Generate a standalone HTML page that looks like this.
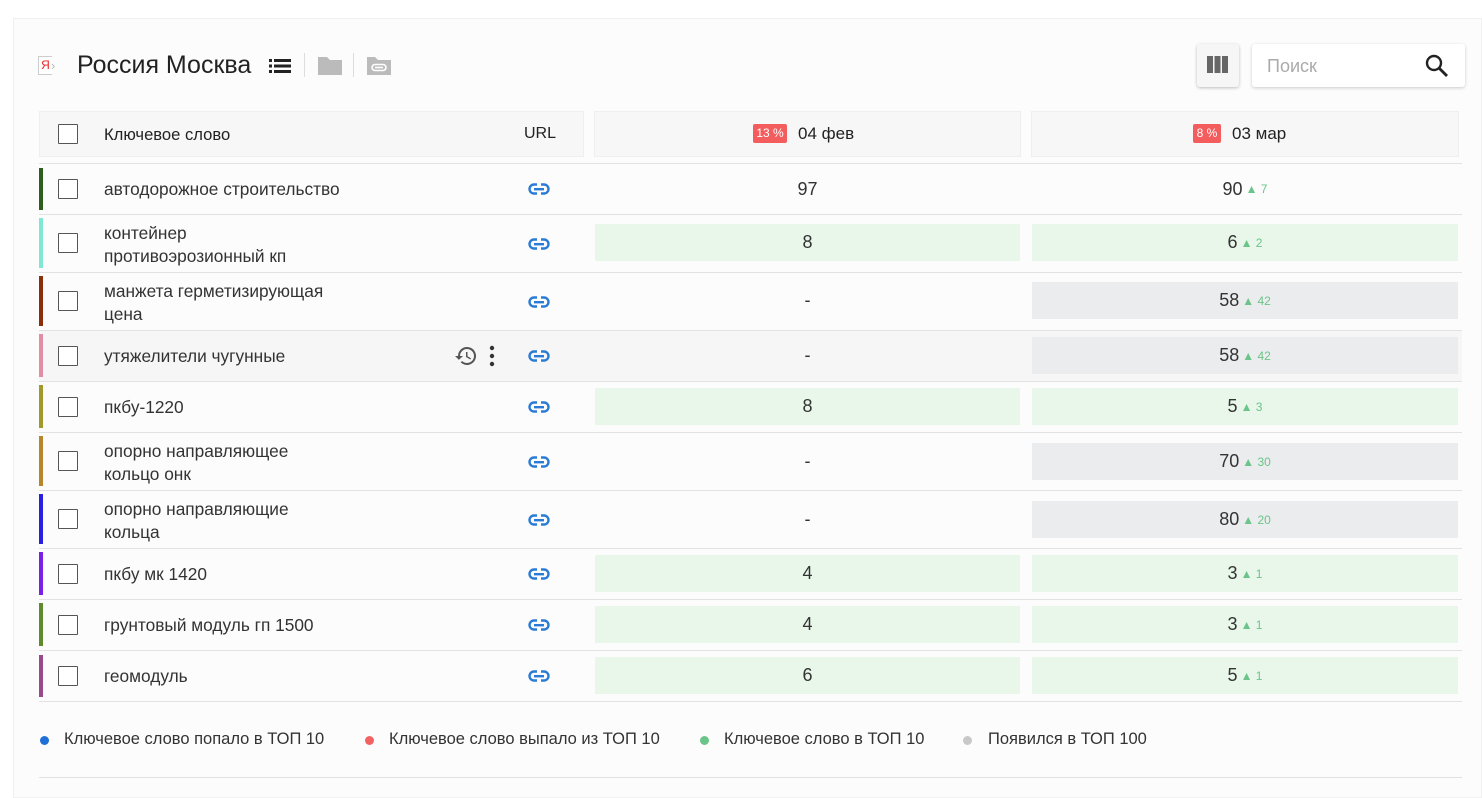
<!DOCTYPE html>
<html><head><meta charset="utf-8"><style>
*{box-sizing:border-box;margin:0;padding:0}
body{width:1482px;height:786px;background:#fff;font-family:"Liberation Sans","DejaVu Sans",sans-serif;color:#333;position:relative;overflow:hidden}
.card{position:absolute;left:13px;top:18px;width:1469px;height:780px;background:#fcfcfc;border:1px solid #f0f0f0}
.a{position:absolute}
.cb{position:absolute;left:58px;width:20px;height:20px;border:1px solid #555;background:#fff;border-radius:1px}
.kw{position:absolute;left:104px;font-size:17.3px;line-height:23px;color:#333}
.hl{position:absolute;left:39px;width:1423px;height:1px;background:#e2e2e2}
.bar{position:absolute;left:39px;width:4px}
.cell{position:absolute;font-size:18px;color:#333;text-align:center;display:flex;align-items:center;justify-content:center}
.up{color:#6bc489;font-size:12px;margin-left:3px}
.lnk{position:absolute;left:528px}
.leg{position:absolute;top:730px;font-size:16.5px;color:#333}
.leg i{position:absolute;left:0;top:6px;width:9px;height:9px;border-radius:50%}
</style></head><body>
<div class="card"></div>
<!-- title -->
<div class="a" style="left:38px;top:56px;width:14px;height:19px;border:1px solid #ccc;border-right:none;background:#fff;font-size:12px;color:#e22;text-align:center;line-height:17px">Я</div>
<div class="a" style="left:51px;top:58px;font-size:13px;color:#bbb">›</div>
<div class="a" style="left:77px;top:51px;font-size:25px;color:#222">Россия Москва</div>
<svg class="a" style="left:268px;top:56px" width="26" height="20" viewBox="0 0 26 20"><g fill="#222"><rect x="1" y="3" width="3" height="3"/><rect x="1" y="8.5" width="3" height="3"/><rect x="1" y="14" width="3" height="3"/><rect x="6" y="3" width="17" height="3"/><rect x="6" y="8.5" width="17" height="3"/><rect x="6" y="14" width="17" height="3"/></g></svg>
<div class="a" style="left:304px;top:53px;width:1px;height:24px;background:#ddd"></div>
<svg class="a" style="left:316px;top:55px" width="28" height="22" viewBox="0 0 28 22"><path d="M2 2h9l3 3h12v15H2z" fill="#bbb"/></svg>
<div class="a" style="left:353px;top:53px;width:1px;height:24px;background:#ddd"></div>
<svg class="a" style="left:365px;top:54px" width="28" height="23" viewBox="0 0 28 23"><path d="M2 3h8l3 3h13v15H2z" fill="#bbb"/><path d="M10 13.5h8" stroke="#fff" stroke-width="1.6"/><rect x="7" y="10.5" width="14" height="6" rx="3" fill="none" stroke="#fff" stroke-width="1.6"/></svg>
<!-- right controls -->
<div class="a" style="left:1197px;top:44px;width:42px;height:43px;background:#f6f6f6;border-radius:3px;box-shadow:0 1px 3px rgba(0,0,0,.25)"></div>
<svg class="a" style="left:1207px;top:56px" width="22" height="18"><g fill="#666"><rect x="0" y="0" width="6" height="17"/><rect x="7.5" y="0" width="6" height="17"/><rect x="15" y="0" width="6" height="17"/></g></svg>
<div class="a" style="left:1252px;top:44px;width:213px;height:43px;background:#fff;border-radius:3px;box-shadow:0 1px 3px rgba(0,0,0,.2)"></div>
<div class="a" style="left:1267px;top:56px;font-size:18px;color:#aaa">Поиск</div>
<svg class="a" style="left:1424px;top:53px" width="26" height="26" viewBox="0 0 26 26"><circle cx="10" cy="10" r="7" fill="none" stroke="#222" stroke-width="2.4"/><path d="M15 15l8 8" stroke="#222" stroke-width="2.8"/></svg>
<!-- header -->
<div class="a" style="left:39px;top:111px;width:545px;height:46px;background:#f7f7f7;border:1px solid #efefef"></div>
<div class="a" style="left:594px;top:111px;width:427px;height:46px;background:#f7f7f7;border:1px solid #efefef"></div>
<div class="a" style="left:1031px;top:111px;width:428px;height:46px;background:#f7f7f7;border:1px solid #efefef"></div>
<div class="cb" style="top:124px"></div>
<div class="a" style="left:104px;top:125px;font-size:16.6px;color:#222">Ключевое слово</div>
<div class="a" style="left:524px;top:125px;font-size:16px;color:#222">URL</div>
<div class="a" style="left:753px;top:124px;width:34px;height:19px;background:#f35d5d;color:#fff;font-size:12px;line-height:19px;text-align:center;border-radius:2px">13 %</div>
<div class="a" style="left:798px;top:124px;font-size:17px;color:#222">04 фев</div>
<div class="a" style="left:1193px;top:124px;width:28px;height:19px;background:#f35d5d;color:#fff;font-size:12px;line-height:19px;text-align:center;border-radius:2px">8 %</div>
<div class="a" style="left:1232px;top:124px;font-size:17px;color:#222">03 мар</div>
<div class="hl" style="top:163px"></div>

<div class="a" style="left:39px;top:331px;width:1423px;height:50px;background:#f6f6f6"></div>

<div class="bar" style="top:168px;height:42px;background:#2e5e1e"></div>
<div class="cb" style="top:179px"></div>
<div class="kw" style="top:178px">автодорожное строительство</div>
<div class="cell" style="left:595px;top:174px;width:425px;height:30px">97</div>
<div class="cell" style="left:1032px;top:174px;width:426px;height:30px">90<span class="up">▲ 7</span></div>
<div class="hl" style="top:214px"></div>

<div class="bar" style="top:218px;height:50px;background:#7fe8d4"></div>
<div class="cb" style="top:233px"></div>
<div class="kw" style="top:222px">контейнер<br>противоэрозионный кп</div>
<div class="cell" style="left:595px;top:224px;width:425px;height:37px;background:#e8f7ea">8</div>
<div class="cell" style="left:1032px;top:224px;width:426px;height:37px;background:#e8f7ea">6<span class="up">▲ 2</span></div>
<div class="hl" style="top:272px"></div>

<div class="bar" style="top:276px;height:50px;background:#8b2e0a"></div>
<div class="cb" style="top:291px"></div>
<div class="kw" style="top:280px">манжета герметизирующая<br>цена</div>
<div class="cell" style="left:595px;top:282px;width:425px;height:37px">-</div>
<div class="cell" style="left:1032px;top:282px;width:426px;height:37px;background:#ebecee">58<span class="up">▲ 42</span></div>
<div class="hl" style="top:330px"></div>

<div class="bar" style="top:334px;height:43px;background:#e38ca6"></div>
<div class="cb" style="top:346px"></div>
<div class="kw" style="top:345px">утяжелители чугунные</div>
<svg class="a" style="left:454px;top:344px" width="24" height="24" viewBox="0 0 24 24"><path d="M13 3a9 9 0 0 0-9 9H1l3.9 3.9L9 12H6a7 7 0 1 1 2.1 5l-1.4 1.4A9 9 0 1 0 13 3zm-1 5v5l4.3 2.5.7-1.2-3.5-2.1V8z" fill="#555"/></svg>
<svg class="a" style="left:486px;top:345px" width="12" height="22"><circle cx="6" cy="3" r="2.2" fill="#333"/><circle cx="6" cy="11" r="2.2" fill="#333"/><circle cx="6" cy="19" r="2.2" fill="#333"/></svg>
<div class="cell" style="left:595px;top:337px;width:425px;height:37px">-</div>
<div class="cell" style="left:1032px;top:337px;width:426px;height:37px;background:#ebecee">58<span class="up">▲ 42</span></div>
<div class="hl" style="top:381px"></div>

<div class="bar" style="top:385px;height:43px;background:#a09a2a"></div>
<div class="cb" style="top:397px"></div>
<div class="kw" style="top:396px">пкбу-1220</div>
<div class="cell" style="left:595px;top:388px;width:425px;height:37px;background:#e8f7ea">8</div>
<div class="cell" style="left:1032px;top:388px;width:426px;height:37px;background:#e8f7ea">5<span class="up">▲ 3</span></div>
<div class="hl" style="top:432px"></div>

<div class="bar" style="top:436px;height:50px;background:#b8862a"></div>
<div class="cb" style="top:451px"></div>
<div class="kw" style="top:440px">опорно направляющее<br>кольцо онк</div>
<div class="cell" style="left:595px;top:443px;width:425px;height:37px">-</div>
<div class="cell" style="left:1032px;top:443px;width:426px;height:37px;background:#ebecee">70<span class="up">▲ 30</span></div>
<div class="hl" style="top:490px"></div>

<div class="bar" style="top:494px;height:50px;background:#2a1ee0"></div>
<div class="cb" style="top:509px"></div>
<div class="kw" style="top:498px">опорно направляющие<br>кольца</div>
<div class="cell" style="left:595px;top:501px;width:425px;height:37px">-</div>
<div class="cell" style="left:1032px;top:501px;width:426px;height:37px;background:#ebecee">80<span class="up">▲ 20</span></div>
<div class="hl" style="top:548px"></div>

<div class="bar" style="top:552px;height:43px;background:#7a1ee8"></div>
<div class="cb" style="top:564px"></div>
<div class="kw" style="top:563px">пкбу мк 1420</div>
<div class="cell" style="left:595px;top:555px;width:425px;height:37px;background:#e8f7ea">4</div>
<div class="cell" style="left:1032px;top:555px;width:426px;height:37px;background:#e8f7ea">3<span class="up">▲ 1</span></div>
<div class="hl" style="top:599px"></div>

<div class="bar" style="top:603px;height:43px;background:#5f8a2e"></div>
<div class="cb" style="top:615px"></div>
<div class="kw" style="top:614px">грунтовый модуль гп 1500</div>
<div class="cell" style="left:595px;top:606px;width:425px;height:37px;background:#e8f7ea">4</div>
<div class="cell" style="left:1032px;top:606px;width:426px;height:37px;background:#e8f7ea">3<span class="up">▲ 1</span></div>
<div class="hl" style="top:650px"></div>

<div class="bar" style="top:655px;height:42px;background:#9a4a8a"></div>
<div class="cb" style="top:666px"></div>
<div class="kw" style="top:665px">геомодуль</div>
<div class="cell" style="left:595px;top:657px;width:425px;height:37px;background:#e8f7ea">6</div>
<div class="cell" style="left:1032px;top:657px;width:426px;height:37px;background:#e8f7ea">5<span class="up">▲ 1</span></div>
<div class="hl" style="top:701px"></div>

<svg width="0" height="0" style="position:absolute"><defs><g id="lk"><rect x="1.5" y="1.5" width="19" height="9" rx="4.5" fill="none" stroke="#2a7bd6" stroke-width="2.4"/><rect x="6" y="5" width="10" height="2.4" fill="#2a7bd6"/><rect x="9" y="0" width="4" height="3" fill="#fcfcfc"/><rect x="9" y="9" width="4" height="3" fill="#fcfcfc"/></g></defs></svg>
<svg class="lnk" style="top:183px" width="22" height="12"><use href="#lk"/></svg>
<svg class="lnk" style="top:238px" width="22" height="12"><use href="#lk"/></svg>
<svg class="lnk" style="top:296px" width="22" height="12"><use href="#lk"/></svg>
<svg class="lnk" style="top:350px" width="22" height="12"><use href="#lk"/></svg>
<svg class="lnk" style="top:401px" width="22" height="12"><use href="#lk"/></svg>
<svg class="lnk" style="top:456px" width="22" height="12"><use href="#lk"/></svg>
<svg class="lnk" style="top:514px" width="22" height="12"><use href="#lk"/></svg>
<svg class="lnk" style="top:568px" width="22" height="12"><use href="#lk"/></svg>
<svg class="lnk" style="top:619px" width="22" height="12"><use href="#lk"/></svg>
<svg class="lnk" style="top:670px" width="22" height="12"><use href="#lk"/></svg>

<div class="leg" style="left:40px;padding-left:24px"><i style="background:#1f6fd6"></i>Ключевое слово попало в ТОП 10</div>
<div class="leg" style="left:365px;padding-left:24px"><i style="background:#f36262"></i>Ключевое слово выпало из ТОП 10</div>
<div class="leg" style="left:700px;padding-left:24px"><i style="background:#6bc489"></i>Ключевое слово в ТОП 10</div>
<div class="leg" style="left:963px;padding-left:25px"><i style="background:#c8c8c8"></i>Появился в ТОП 100</div>
<div class="hl" style="top:777px"></div>
</body></html>
